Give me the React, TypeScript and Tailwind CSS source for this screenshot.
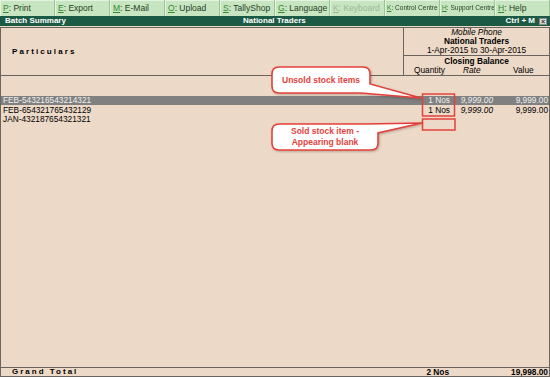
import React from "react";

const buttons: { k: string; label: string; dim?: boolean; small?: boolean }[] = [
  { k: "P", label: "Print" },
  { k: "E", label: "Export" },
  { k: "M", label: "E-Mail" },
  { k: "O", label: "Upload" },
  { k: "S", label: "TallyShop" },
  { k: "G", label: "Language" },
  { k: "K", label: "Keyboard", dim: true },
  { k: "K", label: "Control Centre", small: true },
  { k: "H", label: "Support Centre", small: true },
  { k: "H", label: "Help" },
];

const rows = [
  { name: "FEB-543216543214321", qty: "1 Nos", rate: "9,999.00", value: "9,999.00", sel: true },
  { name: "FEB-654321765432129", qty: "1 Nos", rate: "9,999.00", value: "9,999.00" },
  { name: "JAN-432187654321321", qty: "", rate: "", value: "" },
];

export default function App() {
  return (
    <div
      className="relative w-[550px] h-[377px] bg-[#edd9c7] flex flex-col overflow-hidden text-black"
      style={{ fontFamily: '"Liberation Sans", Arial, sans-serif' }}
    >
      {/* button bar */}
      <div className="flex h-[16px] bg-[#c7e5c0]">
        {buttons.map((b, i) => (
          <div
            key={i}
            className="w-[55px] h-full flex items-center whitespace-nowrap overflow-hidden border-r border-r-[#9cc597] shadow-[inset_1px_1px_0_#e4f3e0] leading-none pl-[3px]"
          >
            <span
              className={
                b.small
                  ? "inline-block text-[8px] scale-x-[0.82] origin-left -ml-[1px]"
                  : "inline-block text-[8.5px]"
              }
            >
              <span className={b.dim ? "text-[#9fb59b] underline" : "text-[#2f8a2c] underline"}>{b.k}</span>
              <span className={b.dim ? "text-[#9fb59b]" : "text-[#1f3d22]"}>: {b.label}</span>
            </span>
          </div>
        ))}
      </div>
      {/* title bar */}
      <div className="relative h-[10px] bg-[#1b5a45] flex items-center text-white font-bold text-[8px] leading-none">
        <span className="pl-[5px]">Batch Summary</span>
        <span className="absolute left-[243px]">National Traders</span>
        <span className="ml-auto pr-[3px] flex items-center gap-[4px]">
          Ctrl + M
          <span className="w-[8px] h-[7px] bg-[#d9d9d9] text-[#333] text-[7px] leading-none flex items-center justify-center border border-[#888]">
            ×
          </span>
        </span>
      </div>
      <div className="h-[1px]" />
      {/* main */}
      <div className="flex-1 flex flex-col border border-[#6a6460] border-b-0 text-[8.3px] leading-none">
        {/* header */}
        <div className="flex h-[48px] border-b border-[#6a6460]">
          <div className="flex-1 flex items-center pl-[11px] font-bold tracking-[2.1px] text-[8px]">
            Particulars
          </div>
          <div className="w-[146px] border-l border-[#6a6460] flex flex-col">
            <div className="h-[28px] flex flex-col items-center justify-center border-b border-[#6a6460]">
              <div className="h-[9.3px] flex items-center italic">Mobile Phone</div>
              <div className="h-[9.3px] flex items-center font-bold">National Traders</div>
              <div className="h-[9.3px] flex items-center">1-Apr-2015 to 30-Apr-2015</div>
            </div>
            <div className="flex-1 flex flex-col">
              <div className="h-[9.5px] flex items-center justify-center font-bold">Closing Balance</div>
              <div className="h-[9.5px] flex items-center">
                <div className="w-[51px] text-center">Quantity</div>
                <div className="w-[42px] pl-[8px] italic">Rate</div>
                <div className="w-[52px] pl-[16px]">Value</div>
              </div>
            </div>
          </div>
        </div>
        {/* body */}
        <div className="flex-1 pt-[19.5px]">
          {rows.map((r, i) => (
            <div
              key={i}
              className={
                "flex h-[9.5px] items-center " +
                (r.sel ? "bg-[#808080] text-[#f0f0f0]" : "")
              }
            >
              <div className="flex-1 pl-[2px]">{r.name}</div>
              <div className="w-[51px] text-right pr-[5px]">{r.qty}</div>
              <div className="w-[42px] text-right pr-[4px] italic">{r.rate}</div>
              <div className="w-[52px] text-right pr-[1px]">{r.value}</div>
            </div>
          ))}
        </div>
        {/* grand total */}
        <div className="flex h-[10px] items-center border-t border-b border-[#6a6460] font-bold">
          <div className="flex-1 pl-[11px] tracking-[2px] text-[8px]">Grand Total</div>
          <div className="w-[51px] text-right pr-[6px]">2 Nos</div>
          <div className="w-[42px]" />
          <div className="w-[52px] text-right pr-[1px]">19,998.00</div>
        </div>
      </div>

      {/* annotations */}
      <svg className="absolute inset-0 pointer-events-none" width="550" height="377">
        <defs>
          <filter id="sh" x="-10%" y="-10%" width="130%" height="140%">
            <feDropShadow dx="1" dy="1" stdDeviation="0.8" floodColor="#000" floodOpacity="0.25" />
          </filter>
        </defs>
        <path
          d="M279,67 H363 Q370,67 370,74 V84 L421,98 L361,93 H279 Q272,93 272,86 V74 Q272,67 279,67 Z"
          fill="#ffffff"
          stroke="#e3413b"
          strokeWidth="1.6"
          filter="url(#sh)"
        />
        <path
          d="M279,124 H367 L422,123 L378,133 V143 Q378,150 371,150 H279 Q272,150 272,143 V131 Q272,124 279,124 Z"
          fill="#ffffff"
          stroke="#e3413b"
          strokeWidth="1.6"
          filter="url(#sh)"
        />
        <rect x="422.5" y="94" width="32" height="22" fill="none" stroke="#e3413b" strokeWidth="1.5" />
        <rect x="422.5" y="119" width="32.5" height="11" fill="none" stroke="#e3413b" strokeWidth="1.5" />
      </svg>
      <div className="absolute left-[272px] top-[67px] w-[98px] h-[26px] flex items-center justify-center text-[8.5px] font-bold text-[#e3413b] leading-none">
        Unsold stock items
      </div>
      <div className="absolute left-[272px] top-[124px] w-[106px] h-[26px] flex flex-col items-center justify-center text-[8.5px] font-bold text-[#e3413b] leading-[11px]">
        <span>Sold stock item -</span>
        <span>Appearing blank</span>
      </div>
    </div>
  );
}
